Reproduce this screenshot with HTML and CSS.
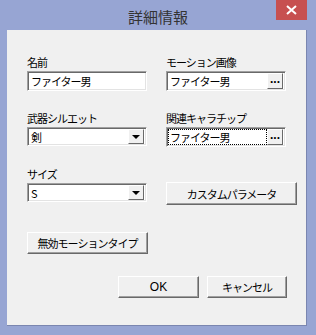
FILE: index.html
```html
<!DOCTYPE html>
<html lang="ja">
<head>
    <meta charset="UTF-8">
    <title>詳細情報</title>
    <link rel="stylesheet" href="styles.css">
</head>
<body>
    <div class="window">
        <div class="titlebar">
            <span class="title">詳細情報</span>
            <span class="close">
                <svg width="11" height="10" viewBox="0 0 11 10">
                    <path d="M1 1 L10 9 M10 1 L1 9" stroke="#fff" stroke-width="2"/>
                </svg>
            </span>
        </div>

        <div class="client">
            <div class="grid">
                <div class="field">
                    <label>名前</label>
                    <div class="edit"><span class="value">ファイター男</span></div>
                </div>
                <div class="field">
                    <label>モーション画像</label>
                    <div class="edit">
                        <span class="value">ファイター男</span>
                        <span class="browse">...</span>
                    </div>
                </div>

                <div class="field row-gap">
                    <label>武器シルエット</label>
                    <div class="combo">
                        <span class="value">剣</span>
                        <span class="drop"><i class="arrow"></i></span>
                    </div>
                </div>
                <div class="field row-gap">
                    <label>関連キャラチップ</label>
                    <div class="edit">
                        <span class="value focus">ファイター男</span>
                        <span class="browse">...</span>
                    </div>
                </div>

                <div class="field row-gap">
                    <label>サイズ</label>
                    <div class="combo">
                        <span class="value">S</span>
                        <span class="drop"><i class="arrow"></i></span>
                    </div>
                </div>
                <div class="field row-gap bottom">
                    <button class="btn wide">カスタムパラメータ</button>
                </div>
            </div>

            <button class="btn motion">無効モーションタイプ</button>

            <div class="actions">
                <button class="btn ok">OK</button>
                <button class="btn cancel">キャンセル</button>
            </div>
        </div>
    </div>
</body>
</html>
```

FILE: styles.css
```css
body {
    margin: 0;
    padding: 0;
    background-color: #ffffff;
    font-family: "Noto Sans CJK JP", "Noto Sans", sans-serif;
    font-size: 11px;
    letter-spacing: -1px;
    color: #000;
}

.window {
    width: 316px;
    height: 335px;
    background-color: #97a5d3;
    box-sizing: border-box;
    padding: 0 8px 0 7px;
}

.titlebar {
    height: 30px;
    position: relative;
    display: flex;
    justify-content: center;
    align-items: center;
}

.title {
    font-size: 15px;
    letter-spacing: 0;
    color: #333;
    padding-top: 3px;
    padding-left: 1px;
}

.close {
    position: absolute;
    top: 0;
    right: 1px;
    width: 31px;
    height: 20px;
    background-color: #c75050;
    display: flex;
    justify-content: center;
    align-items: center;
}

.client {
    width: 300px;
    height: 296px;
    background-color: #f0f0f0;
    box-sizing: border-box;
    padding: 25px 0 0 20px;
    border-right: 1px solid #7a86b0;
    border-bottom: 1px solid #7a86b0;
}

.grid {
    display: grid;
    grid-template-columns: 120px 131px;
    column-gap: 19px;
}

.field {
    display: flex;
    flex-direction: column;
}

.row-gap {
    margin-top: 20px;
}

.bottom {
    justify-content: flex-end;
}

label {
    line-height: 14px;
    height: 14px;
    margin-bottom: 2px;
}

.edit,
.combo {
    width: 120px;
    height: 20px;
    box-sizing: border-box;
    background-color: #fff;
    border-top: 1px solid #a0a0a0;
    border-left: 1px solid #a0a0a0;
    border-right: 1px solid #fff;
    border-bottom: 1px solid #fff;
    box-shadow: inset 1px 1px 0 #696969, inset -1px -1px 0 #e3e3e3;
    display: flex;
    align-items: center;
    padding: 0 2px 0 2px;
    position: relative;
}

.combo {
    height: 19px;
}

.value {
    flex: 1;
    line-height: 14px;
    white-space: nowrap;
    padding-left: 1px;
}

.focus {
    outline: 1px dotted #000;
    outline-offset: 0;
    margin-right: 1px;
}

.browse {
    width: 16px;
    height: 16px;
    box-sizing: border-box;
    background-color: #f0f0f0;
    border-top: 1px solid #fff;
    border-left: 1px solid #fff;
    border-right: 1px solid #696969;
    border-bottom: 1px solid #696969;
    font-family: "Liberation Sans", Arial, sans-serif;
    font-size: 12px;
    font-weight: bold;
    line-height: 10px;
    text-align: center;
    letter-spacing: 0;
}

.drop {
    width: 16px;
    height: 15px;
    box-sizing: border-box;
    background-color: #f0f0f0;
    border-top: 1px solid #fff;
    border-left: 1px solid #fff;
    border-right: 1px solid #696969;
    border-bottom: 1px solid #696969;
    display: flex;
    justify-content: center;
    align-items: center;
}

.arrow {
    width: 0;
    height: 0;
    border-left: 4px solid transparent;
    border-right: 4px solid transparent;
    border-top: 4px solid #000;
    margin-top: 1px;
}

.btn {
    font-family: "Noto Sans CJK JP", "Noto Sans", sans-serif;
    font-size: 11px;
    letter-spacing: -1px;
    color: #000;
    background-color: #f0f0f0;
    box-sizing: border-box;
    border-top: 1px solid #fff;
    border-left: 1px solid #fff;
    border-right: 1px solid #696969;
    border-bottom: 1px solid #696969;
    box-shadow: inset -1px -1px 0 #a0a0a0;
    padding: 0;
    line-height: 14px;
}

.wide {
    width: 131px;
    height: 23px;
    margin-bottom: -3px;
}

.motion {
    display: block;
    width: 121px;
    height: 22px;
    margin-top: 30px;
}

.actions {
    display: flex;
    gap: 8px;
    margin: 22px 0 0 91px;
}

.ok {
    width: 81px;
    height: 22px;
    font-family: "Liberation Sans", Arial, sans-serif;
    font-size: 12px;
    letter-spacing: 0;
}

.cancel {
    width: 80px;
    height: 22px;
}
```
